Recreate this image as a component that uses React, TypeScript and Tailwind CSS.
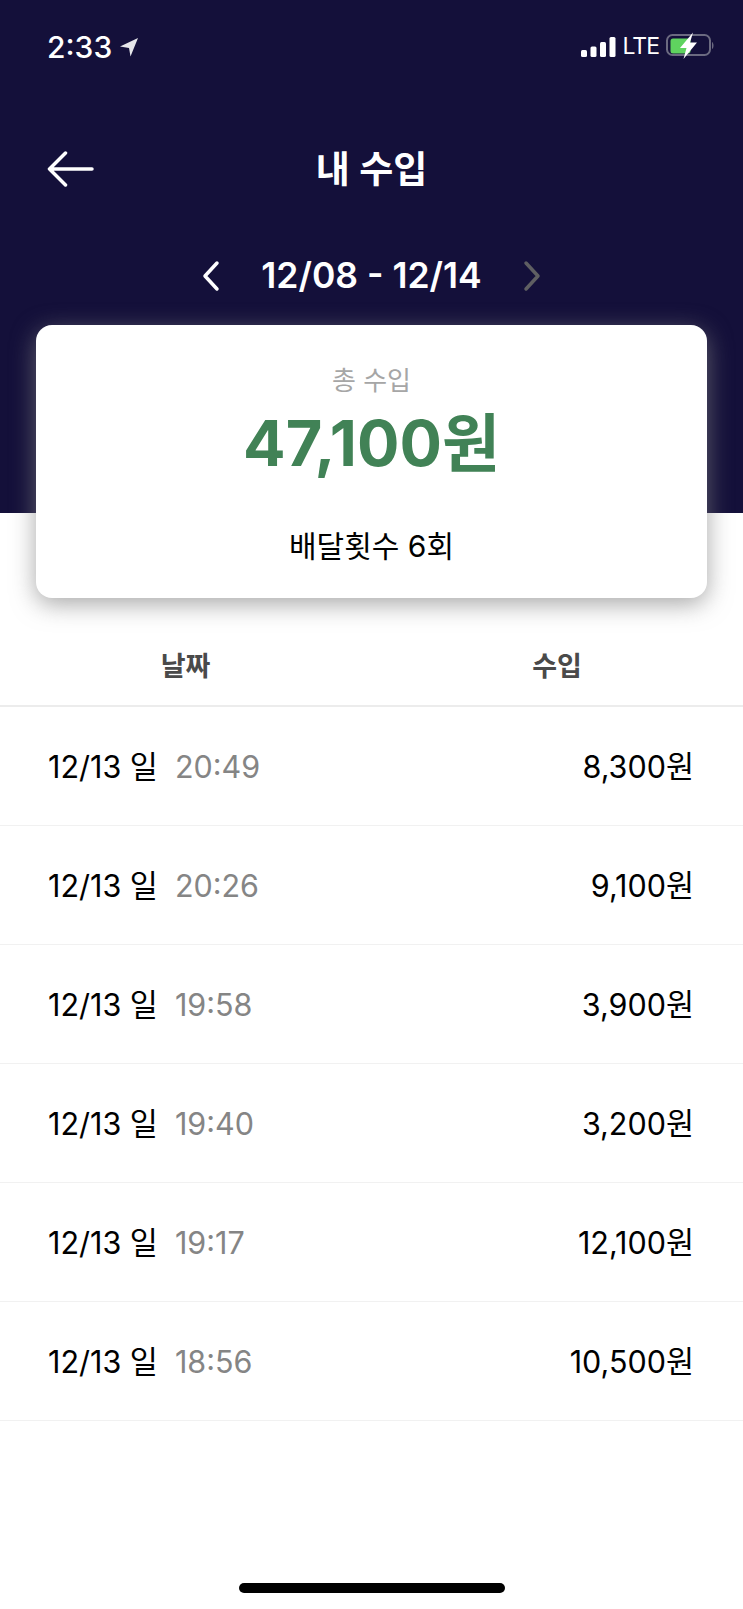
const rows = [
  { time: '20:49', amount: '8,300원' },
  { time: '20:26', amount: '9,100원' },
  { time: '19:58', amount: '3,900원' },
  { time: '19:40', amount: '3,200원' },
  { time: '19:17', amount: '12,100원' },
  { time: '18:56', amount: '10,500원' },
];

const font = "font-['Inter','Noto_Sans_CJK_KR',sans-serif]";

function StatusBar() {
  return (
    <div className="flex h-[46px] items-center justify-between pl-[47px] pr-[29px] pt-[3px] text-white">
      <div className="flex items-center gap-[7px]">
        <span className="text-[30px] font-medium leading-none">2:33</span>
        <svg width="20" height="20" viewBox="0 0 20 20" fill="#e6e6ea">
          <path d="M19 1 L1 9.5 L10 11 L11.5 19.5 Z" />
        </svg>
      </div>
      <div className="flex items-center gap-[7px]">
        <svg width="35" height="22" viewBox="0 0 35 22" fill="white">
          <rect x="0" y="14" width="6" height="7" rx="1.5" />
          <rect x="9.5" y="10.5" width="6" height="10.5" rx="1.5" />
          <rect x="19" y="6" width="6" height="15" rx="1.5" />
          <rect x="28.5" y="1" width="6" height="20" rx="1.5" />
        </svg>
        <span className="text-[23px] leading-none tracking-[-1px]">LTE</span>
        <svg width="48" height="34" viewBox="0 0 48 34">
          <rect x="1" y="5" width="43" height="20" rx="5.5" fill="none" stroke="#6b6a80" strokeWidth="2" />
          <rect x="4.5" y="8.5" width="20" height="15" rx="2.5" fill="#5fd35f" />
          <path d="M46 12 C48 13 48 18 46 19 Z" fill="#6b6a80" />
          <path d="M27 2.5 L14 18 H20.5 L17.5 29 L31 12.5 H24 Z" fill="white" />
        </svg>
      </div>
    </div>
  );
}

export default function App() {
  return (
    <div className={`${font} flex min-h-[1609px] w-[743px] flex-col bg-white`}>
      <header className="h-[513px] bg-[#14103a] pt-[22px]">
        <StatusBar />
        <div className="mt-[67px] grid h-[68px] grid-cols-[1fr_auto_1fr] items-center px-[47px]">
          <svg width="47" height="36" viewBox="0 0 47 36" fill="none" stroke="white" strokeWidth="3.5" strokeLinecap="round" strokeLinejoin="round">
            <path d="M45 18 H2.5 M18.5 2 L2.5 18 L18.5 34" />
          </svg>
          <h1 className="text-[37px] font-semibold leading-none text-white">내 수입</h1>
        </div>
        <div className="mt-[55px] flex items-center justify-center gap-[41px]">
          <svg width="18" height="32" viewBox="0 0 18 32" fill="none" stroke="white" strokeWidth="3.5" strokeLinecap="round" strokeLinejoin="round">
            <path d="M15 3 L3 16 L15 29" />
          </svg>
          <span className="text-[35.5px] font-semibold leading-none text-white">12/08 - 12/14</span>
          <svg width="18" height="32" viewBox="0 0 18 32" fill="none" stroke="#5f5f62" strokeWidth="3.5" strokeLinecap="round" strokeLinejoin="round">
            <path d="M3 3 L15 16 L3 29" />
          </svg>
        </div>
      </header>

      <section className="relative z-10 mx-[36px] -mt-[188px] flex h-[273px] flex-col items-center rounded-[16px] bg-white pt-[43px] shadow-[0_6px_24px_rgba(130,130,130,0.7)]">
        <p className="text-[26px] leading-none text-[#a6a6a6]">총 수입</p>
        <p className="mt-[18px] text-[63px] font-bold leading-none text-[#418256]">47,100원</p>
        <p className="mt-[56px] text-[30px] leading-none text-black">배달횟수 6회</p>
      </section>

      <div className="flex h-[109px] items-end border-b-2 border-[#ececec] pb-[25px] text-[27px] font-semibold leading-none text-[#4a4a4a]">
        <div className="w-[371px] text-center">날짜</div>
        <div className="flex-1 text-center">수입</div>
      </div>

      <ul>
        {rows.map((row) => (
          <li key={row.time} className="flex h-[119px] items-center justify-between border-b border-[#f1f1f1] pl-[48px] pr-[49px] pt-[2px] text-[30.5px] leading-none">
            <div className="flex gap-[17px]">
              <span className="text-black">12/13 일</span>
              <span className="text-[#858585]">{row.time}</span>
            </div>
            <span className="text-black">{row.amount}</span>
          </li>
        ))}
      </ul>

      <div className="mt-auto flex justify-center pb-[16px]">
        <div className="h-[10px] w-[266px] rounded-full bg-black" />
      </div>
    </div>
  );
}
